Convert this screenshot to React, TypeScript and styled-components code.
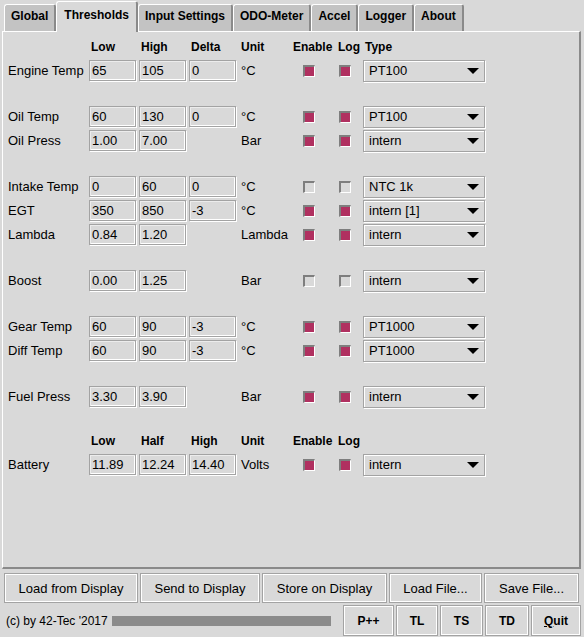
import React from 'react';
import styled, { createGlobalStyle } from 'styled-components';

const GlobalStyle = createGlobalStyle`
  html, body {
    margin: 0;
    padding: 0;
    background: #d9d9d9;
  }
  body {
    font-family: 'Liberation Sans', Arial, sans-serif;
    color: #000;
  }
`;

const Window = styled.div`
  width: 584px;
  height: 637px;
  background: #d9d9d9;
  display: flex;
  flex-direction: column;
  box-sizing: border-box;
  padding: 0 3px 0 2px;
`;

const TabBar = styled.div`
  display: flex;
  align-items: flex-end;
  height: 31px;
  padding-left: 2px;
  position: relative;
  z-index: 1;
`;

const Tab = styled.div<{ $active?: boolean }>`
  box-sizing: border-box;
  height: ${(p) => (p.$active ? '31px' : '27px')};
  margin-bottom: ${(p) => (p.$active ? '-1px' : '0')};
  padding: ${(p) => (p.$active ? '6px 7px 0' : '4px 6px 0')};
  background: ${(p) => (p.$active ? '#d9d9d9' : '#c3c3c3')};
  border-top: 1px solid #fff;
  border-left: 1px solid #fff;
  border-right: 2px solid #8a8a8a;
  border-radius: 3px 3px 0 0;
  font-size: 12px;
  font-weight: bold;
  white-space: nowrap;
`;

const Panel = styled.div`
  box-sizing: border-box;
  height: 540px;
  border-top: 1px solid #fff;
  border-left: 1px solid #fff;
  border-right: 2px solid #8a8a8a;
  border-bottom: 2px solid #8a8a8a;
  padding: 3px 0 0 5px;
  display: flex;
  flex-direction: column;
`;

const Row = styled.div`
  display: flex;
  align-items: center;
  height: 24px;
  gap: 3px;
`;

const Spacer = styled.div<{ $h: number }>`
  height: ${(p) => p.$h}px;
`;

const Cell = styled.div<{ $w: number; $pad?: number }>`
  width: ${(p) => p.$w}px;
  flex: none;
  box-sizing: border-box;
  padding-left: ${(p) => p.$pad ?? 0}px;
  font-size: 13px;
  white-space: nowrap;
`;

const Head = styled(Cell)`
  font-size: 12px;
  font-weight: bold;
`;

const Entry = styled.div`
  width: 47px;
  height: 21px;
  flex: none;
  box-sizing: border-box;
  border: 1px solid #a3a3a3;
  box-shadow: inset 1px 1px 0 #ececec, inset -1px -1px 0 #fff, 1px 1px 0 #fff;
  padding: 2px 0 0 2px;
  font-size: 13px;
  line-height: 15px;
`;

const Check = styled.div<{ $on: boolean; $offset: number }>`
  width: 12px;
  height: 12px;
  box-sizing: border-box;
  margin-left: ${(p) => p.$offset}px;
  border-style: solid;
  border-width: 2px 1px 1px 2px;
  border-color: #7e7e7e #fff #fff #7e7e7e;
  background: ${(p) => (p.$on ? '#b03060' : '#d9d9d9')};
`;

const Select = styled.div`
  width: 122px;
  height: 22px;
  flex: none;
  box-sizing: border-box;
  border: 1px solid #a3a3a3;
  box-shadow: inset 1px 1px 0 #fff, 1px 1px 0 #fff;
  display: flex;
  align-items: center;
  justify-content: space-between;
  padding: 0 5px 0 5px;
  font-size: 13px;
`;

const Arrow = styled.span`
  width: 0;
  height: 0;
  border-left: 6px solid transparent;
  border-right: 6px solid transparent;
  border-top: 6px solid #000;
  margin-top: 1px;
`;

const ButtonRow = styled.div`
  display: flex;
  gap: 2px;
  margin-top: 4px;
  padding-left: 2px;
  height: 30px;
`;

const Button = styled.div<{ $w: number; $bold?: boolean }>`
  width: ${(p) => p.$w}px;
  flex: none;
  box-sizing: border-box;
  border: 1px solid #a3a3a3;
  box-shadow: inset 1px 1px 0 #fff, inset -1px -1px 0 #fff;
  display: flex;
  align-items: center;
  justify-content: center;
  font-size: ${(p) => (p.$bold ? '12px' : '13px')};
  font-weight: ${(p) => (p.$bold ? 'bold' : 'normal')};
  white-space: nowrap;
`;

const StatusBar = styled.div`
  display: flex;
  align-items: center;
  margin-top: 1px;
  height: 33px;
`;

const Copyright = styled.div`
  font-size: 12px;
  width: 110px;
  padding-left: 4px;
  flex: none;
  box-sizing: border-box;
`;

const Progress = styled.div`
  width: 219px;
  height: 10px;
  background: #8b8b8b;
  flex: none;
  margin-right: 12px;
`;

const ToolButtons = styled.div`
  display: flex;
  gap: 2px;
  height: 31px;
`;

type Sensor = {
  label: string;
  low: string;
  high: string;
  delta?: string;
  unit: string;
  enable: boolean;
  log: boolean;
  type: string;
};

type Item = Sensor | { gap: number } | { header: string[] };

const items: Item[] = [
  { header: ['Low', 'High', 'Delta'] },
  { label: 'Engine Temp', low: '65', high: '105', delta: '0', unit: '°C', enable: true, log: true, type: 'PT100' },
  { gap: 22 },
  { label: 'Oil Temp', low: '60', high: '130', delta: '0', unit: '°C', enable: true, log: true, type: 'PT100' },
  { label: 'Oil Press', low: '1.00', high: '7.00', unit: 'Bar', enable: true, log: true, type: 'intern' },
  { gap: 22 },
  { label: 'Intake Temp', low: '0', high: '60', delta: '0', unit: '°C', enable: false, log: false, type: 'NTC 1k' },
  { label: 'EGT', low: '350', high: '850', delta: '-3', unit: '°C', enable: true, log: true, type: 'intern [1]' },
  { label: 'Lambda', low: '0.84', high: '1.20', unit: 'Lambda', enable: true, log: true, type: 'intern' },
  { gap: 22 },
  { label: 'Boost', low: '0.00', high: '1.25', unit: 'Bar', enable: false, log: false, type: 'intern' },
  { gap: 22 },
  { label: 'Gear Temp', low: '60', high: '90', delta: '-3', unit: '°C', enable: true, log: true, type: 'PT1000' },
  { label: 'Diff Temp', low: '60', high: '90', delta: '-3', unit: '°C', enable: true, log: true, type: 'PT1000' },
  { gap: 22 },
  { label: 'Fuel Press', low: '3.30', high: '3.90', unit: 'Bar', enable: true, log: true, type: 'intern' },
  { gap: 20 },
  { header: ['Low', 'Half', 'High'] },
  { label: 'Battery', low: '11.89', high: '12.24', delta: '14.40', unit: 'Volts', enable: true, log: true, type: 'intern' },
];

const tabs = ['Global', 'Thresholds', 'Input Settings', 'ODO-Meter', 'Accel', 'Logger', 'About'];

function SensorRow({ s }: { s: Sensor }) {
  return (
    <Row>
      <Cell $w={78}>{s.label}</Cell>
      <Entry>{s.low}</Entry>
      <Entry>{s.high}</Entry>
      {s.delta !== undefined ? <Entry>{s.delta}</Entry> : <Cell $w={47} />}
      <Cell $w={51} $pad={2}>{s.unit}</Cell>
      <Cell $w={42}>
        <Check $on={s.enable} $offset={10} />
      </Cell>
      <Cell $w={22}>
        <Check $on={s.log} $offset={1} />
      </Cell>
      <Select>
        <span>{s.type}</span>
        <Arrow />
      </Select>
    </Row>
  );
}

export default function App() {
  return (
    <>
      <GlobalStyle />
      <Window>
        <TabBar>
          {tabs.map((t) => (
            <Tab key={t} $active={t === 'Thresholds'}>
              {t}
            </Tab>
          ))}
        </TabBar>
        <Panel>
          {items.map((it, i) => {
            if ('gap' in it) return <Spacer key={i} $h={it.gap} />;
            if ('header' in it)
              return (
                <Row key={i}>
                  <Cell $w={78} />
                  {it.header.map((h) => (
                    <Head key={h} $w={47} $pad={2}>
                      {h}
                    </Head>
                  ))}
                  <Head $w={51} $pad={2}>Unit</Head>
                  <Head $w={42}>Enable</Head>
                  <Head $w={22}>Log</Head>
                  {i === 0 && <Head $w={60} $pad={2}>Type</Head>}
                </Row>
              );
            return <SensorRow key={i} s={it} />;
          })}
        </Panel>
        <ButtonRow>
          <Button $w={134}>Load from Display</Button>
          <Button $w={120}>Send to Display</Button>
          <Button $w={125}>Store on Display</Button>
          <Button $w={93}>Load File...</Button>
          <Button $w={95}>Save File...</Button>
        </ButtonRow>
        <StatusBar>
          <Copyright>(c) by 42-Tec '2017</Copyright>
          <Progress />
          <ToolButtons>
            <Button $w={51} $bold>P++</Button>
            <Button $w={42} $bold>TL</Button>
            <Button $w={43} $bold>TS</Button>
            <Button $w={44} $bold>TD</Button>
            <Button $w={50} $bold>
              <span>
                <u>Q</u>uit
              </span>
            </Button>
          </ToolButtons>
        </StatusBar>
      </Window>
    </>
  );
}
